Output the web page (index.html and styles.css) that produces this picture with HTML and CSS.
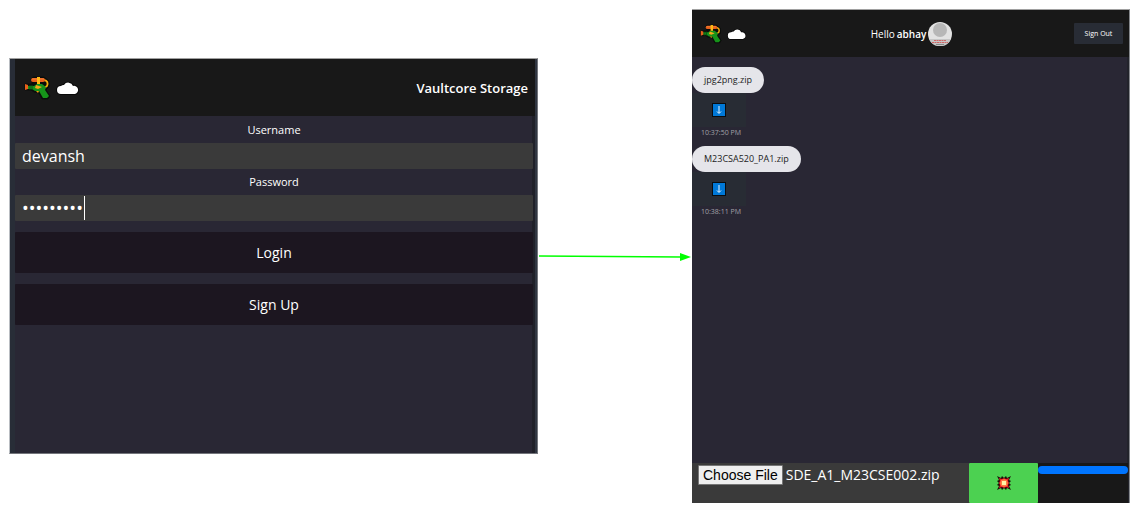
FILE: index.html
```html
<!DOCTYPE html>
<html lang="en">
<head>
<meta charset="utf-8">
<meta name="viewport" content="width=device-width, initial-scale=1">
<title>Vaultcore Storage</title>
<link rel="stylesheet" href="styles.css">
</head>
<body>
<svg class="defs" aria-hidden="true">
  <symbol id="blaster" viewBox="0 0 27 24">
    <path d="M1 8h7V6l-1-3 2-2h11l5 4v6l-3 3 4 6-2 3h-6l-3-6-5-1-3-2H1z" fill="#0b0d0b" stroke="#0b0d0b" stroke-width="1" stroke-linejoin="round"/>
    <path d="M20 4q5 1 3 6l-3 2" fill="none" stroke="#f5ad0e" stroke-width="1.800"/>
    <rect x="7" y="2" width="14" height="4" rx="2" fill="#e8601c"/>
    <path d="M8 3h12" stroke="#f58237" stroke-width="1"/>
    <path d="M13 1h3v8h-3z" fill="#ffb914"/>
    <path d="M4 10h6l3-2h5l4 3-1 3 4 6-2 2h-4l-4-7h-4l-3-2H4z" fill="#16931a"/>
    <path d="M6 9v5M8 9v5" stroke="#0a5110" stroke-width="1"/>
    <path d="M1 8l3 1v4l-3 1z" fill="#e8601c"/>
    <path d="M12 9l6 2-4 2-3-1z" fill="#f5a51a"/>
    <path d="M12 15l3 0-1 2z" fill="#ef9e12"/>
  </symbol>
  <symbol id="cloud" viewBox="0 0 24 16">
    <path d="M5 14a4 4 0 0 1 0-8 4 4 0 0 1 3-1 5 5 0 0 1 9 1 4 4 0 0 1 2 8z" fill="#fff" stroke="#080808" stroke-width="2" stroke-linejoin="round" paint-order="stroke"/>
  </symbol>
  <symbol id="download" viewBox="0 0 14 14">
    <path d="M0 0h14v14H0z" fill="#080c10"/>
    <path d="M1 1h12v12H1z" fill="#0078d7"/>
    <path d="M7 3v7M5 8.500l2 2 2-2" fill="none" stroke="#e9f5ff" stroke-width="1"/>
  </symbol>
</svg>
<main class="flow">
  <section class="panel login">
    <header class="login-bar">
      <span class="brand"><svg class="gun"><use href="#blaster"/></svg><svg class="cloud"><use href="#cloud"/></svg></span>
      <h1 class="title">Vaultcore Storage</h1>
    </header>
    <form class="login-form">
      <label class="field-label" for="user">Username</label>
      <input class="field" id="user" type="text" value="devansh">
      <label class="field-label" for="pass">Password</label>
      <div class="field-wrap">
        <input class="field secret" id="pass" type="password" value="vaultcore">
        <span class="caret"></span>
      </div>
      <button class="action" type="submit">Login</button>
      <button class="action" type="button">Sign Up</button>
    </form>
  </section>

  <svg class="arrow" viewBox="0 0 154 10" preserveAspectRatio="none" aria-hidden="true">
    <path d="M1 4L143 5" stroke="#00ff00" stroke-width="1.500"/>
    <path d="M142 1l11 4-11 4z" fill="#00ff00"/>
  </svg>

  <section class="panel files">
    <header class="files-bar">
      <span class="brand"><svg class="gun"><use href="#blaster"/></svg><svg class="cloud"><use href="#cloud"/></svg></span>
      <span class="greeting">Hello <b>abhay</b>
        <svg class="avatar" viewBox="0 0 24 24">
          <circle cx="12" cy="12" r="12" fill="#e2e2e2"/>
          <path d="M1 17h22a12 12 0 0 1-22 0z" fill="#c6c6c6"/>
          <circle cx="12" cy="8" r="7" fill="#b7b7b7"/>
          <path d="M6 18.500h12M4 20.500h16" stroke="#cf6767" stroke-width="1" stroke-dasharray="2 .5"/>
          <path d="M8 22.500h8" stroke="#858585" stroke-width="1"/>
        </svg>
      </span>
      <button class="sign-out" type="button">Sign Out</button>
    </header>
    <ul class="file-list">
      <li class="file">
        <span class="bubble">jpg2png.zip</span>
        <button class="download" type="button" aria-label="Download jpg2png.zip"><svg><use href="#download"/></svg></button>
        <time class="time">10:37:50 PM</time>
      </li>
      <li class="file">
        <span class="bubble">M23CSA520_PA1.zip</span>
        <button class="download" type="button" aria-label="Download M23CSA520_PA1.zip"><svg><use href="#download"/></svg></button>
        <time class="time">10:38:11 PM</time>
      </li>
    </ul>
    <form class="upload">
      <div class="picker">
        <input class="picker-input" id="file" type="file">
        <label class="picker-button" for="file">Choose File</label>
        <span class="picker-name">SDE_A1_M23CSE002.zip</span>
      </div>
      <button class="send" type="submit" aria-label="Upload">
        <svg viewBox="0 0 14 14">
          <path d="M0 0l4 2 1-2 2 2 2-2 1 2 4-2-2 4 2 1-2 2 2 2-2 1 2 4-4-2-1 2-2-2-2 2-1-2-4 2 2-4-2-1 2-2-2-2 2-1z" fill="#1d0a08"/>
          <path d="M2 2l3 1 2-1 2 1 3-1-1 3 1 2-1 2 1 3-3-1-2 1-2-1-3 1 1-3-1-2 1-2z" fill="#ee1c25"/>
          <path d="M4 4l3-1 3 1 1 3-1 3-3 1-3-1-1-3z" fill="#ff7a45"/>
          <path d="M5 5h4v4H5z" fill="#fff3a8"/>
        </svg>
      </button>
      <progress class="progress" value="100" max="100" aria-label="Upload progress"></progress>
    </form>
  </section>
</main>
</body>
</html>
```
FILE: styles.css
```css
* { box-sizing: border-box; }

body {
  margin: 0;
  background: #fff;
  color: #fff;
  font-family: "Open Sans", "Noto Sans", sans-serif;
}

button, input { font-family: inherit; color: inherit; }
button { padding: 0; border: 0; cursor: pointer; }

.defs { position: absolute; width: 0; height: 0; }

.flow {
  display: grid;
  grid-template-columns: 529fr 154fr 438fr;
  align-items: start;
  padding: 9px 2px 7px 9px;
}

.panel { background: #292734; }

.login {
  min-height: 396px;
  margin-top: 49px;
  border: 1px solid #73757b;
  border-top-color: #a0a0a0;
  border-left-color: #b9bdc2;
  box-shadow: inset 5px 0 #282d37, inset -2px 0 #303641, inset -5px 0 #202129;
  padding: 0 2px 0 5px;
}

.login-bar {
  display: flex;
  align-items: center;
  justify-content: space-between;
  height: 57px;
  padding: 0 7px 0 9px;
  background: #181818;
}

.brand { display: flex; align-items: center; gap: 5px; }
.gun { width: 27px; height: 24px; }
.cloud { width: 24px; height: 16px; }

.title { margin: 0; font-size: 13px; font-weight: 600; }

.login-form {
  display: flex;
  flex-direction: column;
  padding: 1px 2px 0 0;
}

.field-label { font-size: 11px; line-height: 26px; text-align: center; }

.field {
  display: block;
  width: 100%;
  height: 26px;
  padding: 0 7px;
  border: 0;
  border-radius: 1px;
  outline: 0;
  background: #3a3a3a;
  font-size: 16px;
}

.secret { font-size: 18px; }

.field-wrap { position: relative; }

.caret {
  position: absolute;
  top: 1px;
  left: 69px;
  width: 1px;
  height: 24px;
  background: #fff;
}

.action {
  height: 41px;
  margin-top: 11px;
  border-radius: 1px;
  background: #1c1620;
  font-size: 14px;
}

.arrow { width: 100%; height: 10px; margin-top: 243px; }

.files {
  display: flex;
  flex-direction: column;
  min-height: 494px;
  border-top: 1px solid #a0a0a0;
  border-right: 1px solid #85888c;
  box-shadow: inset -2px 0 #22232b;
}

.files-bar {
  display: grid;
  grid-template-columns: 1fr auto 1fr;
  align-items: center;
  height: 47px;
  padding: 0 6px 0 8px;
  background: #181818;
}

.files .brand { gap: 5px; }
.files .gun { width: 22px; height: 20px; }
.files .cloud { width: 20px; height: 14px; }

.greeting { display: flex; align-items: center; gap: 2px; font-size: 10px; }
.greeting b { font-weight: 600; }
.avatar { width: 24px; height: 24px; }

.sign-out {
  justify-self: end;
  width: 49px;
  height: 21px;
  border-radius: 1px;
  background: #282c35;
  font-size: 7px;
}

.file-list {
  flex: 1;
  margin: 0;
  padding: 10px 0 0;
  list-style: none;
}

.file { display: flex; flex-direction: column; align-items: flex-start; height: 79px; }

.bubble {
  padding: 0 12px;
  border-radius: 13px;
  background: #e5e5ea;
  color: #222;
  font-size: 9px;
  line-height: 26px;
}

.download {
  display: grid;
  place-items: center;
  width: 54px;
  height: 34px;
  background: #282c34;
}
.download svg { width: 14px; height: 14px; }

.time { padding-left: 9px; color: #a2a1a8; font-size: 7px; line-height: 12px; }

.upload {
  display: grid;
  grid-template-columns: 277fr 69fr 90fr;
  height: 40px;
  margin-right: 1px;
  background: #181818;
}

.picker {
  display: flex;
  align-items: flex-start;
  gap: 3px;
  padding: 2px 6px;
  background: #3a3a3a;
}

.picker-input { position: absolute; width: 1px; height: 1px; opacity: 0; }

.picker-button {
  padding: 0 4px;
  border: 1px solid #767676;
  border-radius: 1px;
  background: #efefef;
  color: #000;
  font: 14px/18px "Liberation Sans", Arial, sans-serif;
}

.picker-name { font-size: 14px; line-height: 20px; }

.send { display: grid; place-items: center; border-radius: 1px; background: #4cd151; }
.send svg { width: 14px; height: 14px; }

.progress {
  width: 100%;
  height: 8px;
  margin-top: 3px;
  border: 0;
  border-radius: 4px;
  appearance: none;
  overflow: hidden;
}
.progress::-webkit-progress-bar { background: #efefef; }
.progress::-webkit-progress-value { background: #0075ff; }
```
